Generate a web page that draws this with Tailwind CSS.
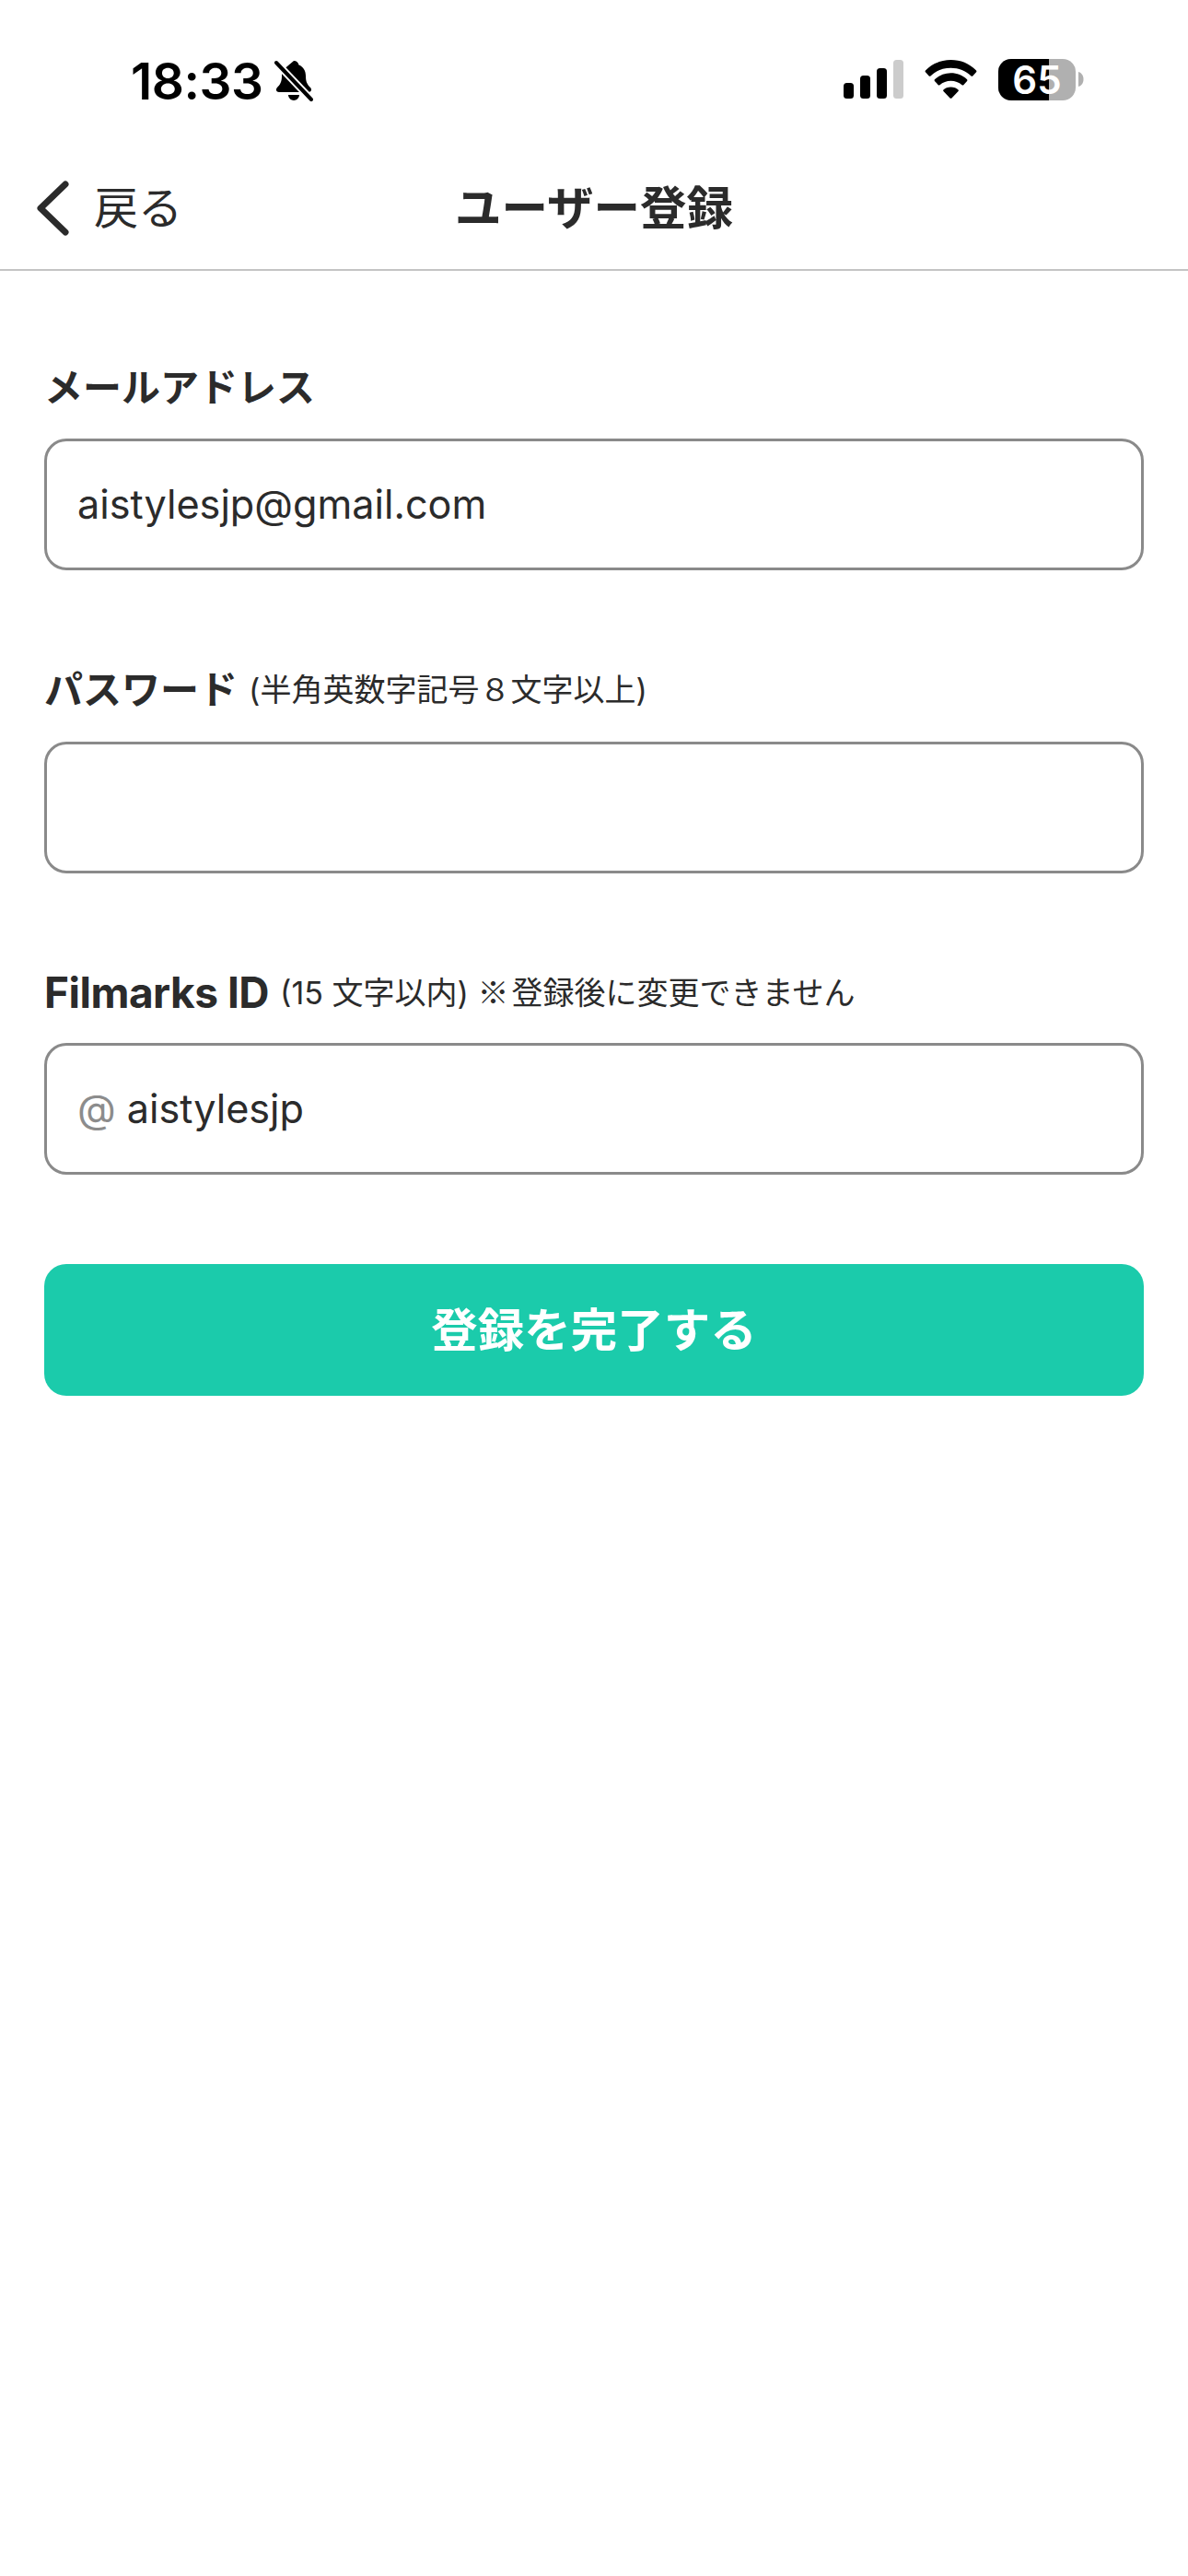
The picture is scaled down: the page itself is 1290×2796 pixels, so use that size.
<!DOCTYPE html>
<html lang="ja">
<head>
<meta charset="utf-8">
<script src="https://cdn.jsdelivr.net/npm/@tailwindcss/browser@4"></script>
</head>
<body class="bg-white">
<div class="w-[1290px] h-[2796px] bg-white text-[#2b2b2b] font-['Inter','Noto_Sans_CJK_JP',sans-serif] overflow-hidden">
  <div class="h-[172px] flex items-start justify-between pt-[58px] pl-[142px] pr-[113px]">
    <div class="flex items-center gap-[12px] h-[60px]">
      <span class="text-[55px] leading-[60px] font-semibold text-black tracking-[-0.5px]">18:33</span>
      <svg width="42" height="46" viewBox="0 0 42 46"><path d="M21 1c3 0 5 2 5.500 4.500 5 2 7.500 6.500 7.500 12 0 6 1.500 9 5 12.500 2 2 1 5-2 5H5c-3 0-4-3-2-5 3-3 5-6 5-12.500V12Z" fill="#000"/><path d="M15 38h12c0 3-3 6-6 6s-6-3-6-6Z" fill="#000"/><path d="M1 2l40 42" stroke="#fff" stroke-width="8"/><path d="M2 3l38 40" stroke="#000" stroke-width="4" stroke-linecap="round"/></svg>
    </div>
    <div class="flex items-center h-[56px]">
      <svg width="65" height="42" viewBox="0 0 65 42" class="mr-[23px]"><rect x="0" y="25" width="11" height="17" rx="3.500" fill="#000"/><rect x="18" y="17" width="11" height="25" rx="3.500" fill="#000"/><rect x="36" y="9" width="11" height="33" rx="3.500" fill="#000"/><rect x="54" y="0" width="11" height="42" rx="3.500" fill="#ccc"/></svg>
      <svg width="57" height="42" viewBox="0 0 60 44" class="mr-[23px]"><path d="M30 0C19 0 9 4 1 12c-.5.600-.5 1.300 0 1.800l4 4.500c.5.500 1.200.500 1.800 0C13 12 21 9 30 9s17 3 23.200 9.300c.6.500 1.300.500 1.800 0l4-4.500c.5-.5.500-1.200 0-1.800C51 4 41 0 30 0Z" fill="#000"/><path d="M30 15c-7 0-13.500 2.600-18.500 7.300-.5.500-.5 1.200 0 1.700l4 4.500c.5.500 1.200.5 1.800 0 3.500-3 8-4.700 12.700-4.700s9.200 1.700 12.700 4.700c.6.500 1.300.500 1.800 0l4-4.500c.5-.5.500-1.200 0-1.700C43.500 17.600 37 15 30 15Z" fill="#000"/><path d="M30 31c-3.500 0-6.500 1.200-8.500 3-.5.500-.5 1.200 0 1.700l7.500 7.800c.5.600 1.500.600 2 0l7.500-7.800c.5-.5.500-1.200 0-1.700-2-1.800-5-3-8.500-3Z" fill="#000"/></svg>
      <div class="relative w-[84px] h-[45px] rounded-[14px] bg-[#b0b0b0] flex">
        <div class="w-[55px] h-full bg-black rounded-l-[14px]"></div>
        <span class="absolute inset-0 flex items-center justify-center text-white text-[42px] leading-[45px] font-semibold">65</span>
      </div>
      <svg width="6" height="16" viewBox="0 0 6 16" class="ml-[3px]"><path d="M0 0c3.500 1 5.500 4 5.500 8S3.500 15 0 16Z" fill="#b0b0b0"/></svg>
    </div>
  </div>

  <div class="relative h-[122px] border-b-2 border-[#c4c4c4] flex items-center justify-center pb-[12px]">
    <div class="absolute left-[38px] top-0 bottom-0 flex items-center gap-[26px] pb-[12px]">
      <svg width="38" height="60" viewBox="0 0 38 60"><path d="M33 4 6 30l27 26" fill="none" stroke="#2b2b2b" stroke-width="7" stroke-linecap="round" stroke-linejoin="round"/></svg>
      <span class="text-[48px] leading-[60px] text-[#2b2b2b] font-normal">戻る</span>
    </div>
    <h1 class="text-[50.500px] leading-[60px] font-bold">ユーザー登録</h1>
  </div>

  <form class="px-[48px] pt-[98px] flex flex-col">
    <label class="h-[58px] flex items-center text-[42px] font-bold leading-[58px]">メールアドレス</label>
    <div class="mt-[26px] h-[143px] rounded-[24px] border-[3px] border-[#8a8a8a] flex items-center pl-[33px] text-[43.200px] font-normal">aistylesjp@gmail.com</div>

    <div class="mt-[101px] h-[58px] flex items-center gap-[12px]">
      <span class="text-[42px] font-bold leading-[58px]">パスワード</span>
      <span class="text-[34px] font-normal leading-[58px]">(半角英数字記号８文字以上)</span>
    </div>
    <div class="mt-[27px] h-[143px] rounded-[24px] border-[3px] border-[#8a8a8a]"></div>

    <div class="mt-[100px] h-[58px] flex items-center gap-[12px]">
      <span class="text-[46px] font-bold leading-[58px] tracking-[-0.5px]">Filmarks ID</span>
      <span class="text-[34px] font-normal leading-[58px]">(15 文字以内) <span class="font-['Noto_Sans_CJK_JP',sans-serif] mr-[3px]">※</span>登録後に変更できません</span>
    </div>
    <div class="mt-[26px] h-[143px] rounded-[24px] border-[3px] border-[#8a8a8a] flex items-center pl-[33px] gap-[12px] text-[43.200px] font-normal">
      <span class="text-[#8c8c8c]">@</span><span>aistylesjp</span>
    </div>

    <div class="mt-[97px] h-[143px] rounded-[24px] bg-[#1bcbab] flex items-center justify-center text-white text-[50.500px] font-bold">登録を完了する</div>
  </form>
</div>
</body>
</html>
